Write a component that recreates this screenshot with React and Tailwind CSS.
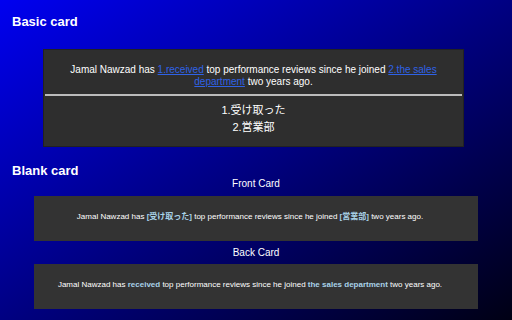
export default function App() {
  return (
    <div className="h-[320px] w-[512px] overflow-hidden bg-[linear-gradient(to_bottom_right,#0000f0,#000014)] px-3 text-white font-['Liberation_Sans','Noto_Sans_CJK_JP',sans-serif]">
      <h2 className="pt-[14px] text-[13px] font-bold leading-4">Basic card</h2>
      <div className="mt-[19px] ml-[31px] w-[421px] border border-[#222] bg-[#2e2e2e] pt-[14px] pb-[10px] text-center text-[10px] leading-[12px]">
        <p className="px-[10px]">
          Jamal Nawzad has <a href="#" className="text-[#2f62e6] underline">1.received</a> top performance reviews since he joined <a href="#" className="text-[#2f62e6] underline">2.the sales department</a> two years ago.
        </p>
        <hr className="mx-[1px] my-[6px] h-[2px] border-0 bg-[#bbb]" />
        <div className="text-[11px] leading-[17px]">
          <div>1.受け取った</div>
          <div>2.営業部</div>
        </div>
      </div>
      <h2 className="mt-[16px] text-[13px] font-bold leading-4">Blank card</h2>
      <div className="-mt-[1px] text-center text-[10px] leading-[12px]">Front Card</div>
      <div className="mx-[22px] mt-[6px] flex h-[45px] items-center justify-center bg-[#333] pb-[4px] pr-[12px] text-[8px]">
        <p>
          Jamal Nawzad has <b className="text-[#a9d2e8]">[受け取った]</b> top performance reviews since he joined <b className="text-[#a9d2e8]">[営業部]</b> two years ago.
        </p>
      </div>
      <div className="mt-[6px] text-center text-[10px] leading-[12px]">Back Card</div>
      <div className="mx-[22px] mt-[5px] flex h-[45px] items-center justify-center bg-[#333] pb-[4px] pr-[12px] text-[8px]">
        <p>
          Jamal Nawzad has <b className="text-[#a9d2e8]">received</b> top performance reviews since he joined <b className="text-[#a9d2e8]">the sales department</b> two years ago.
        </p>
      </div>
    </div>
  )
}
